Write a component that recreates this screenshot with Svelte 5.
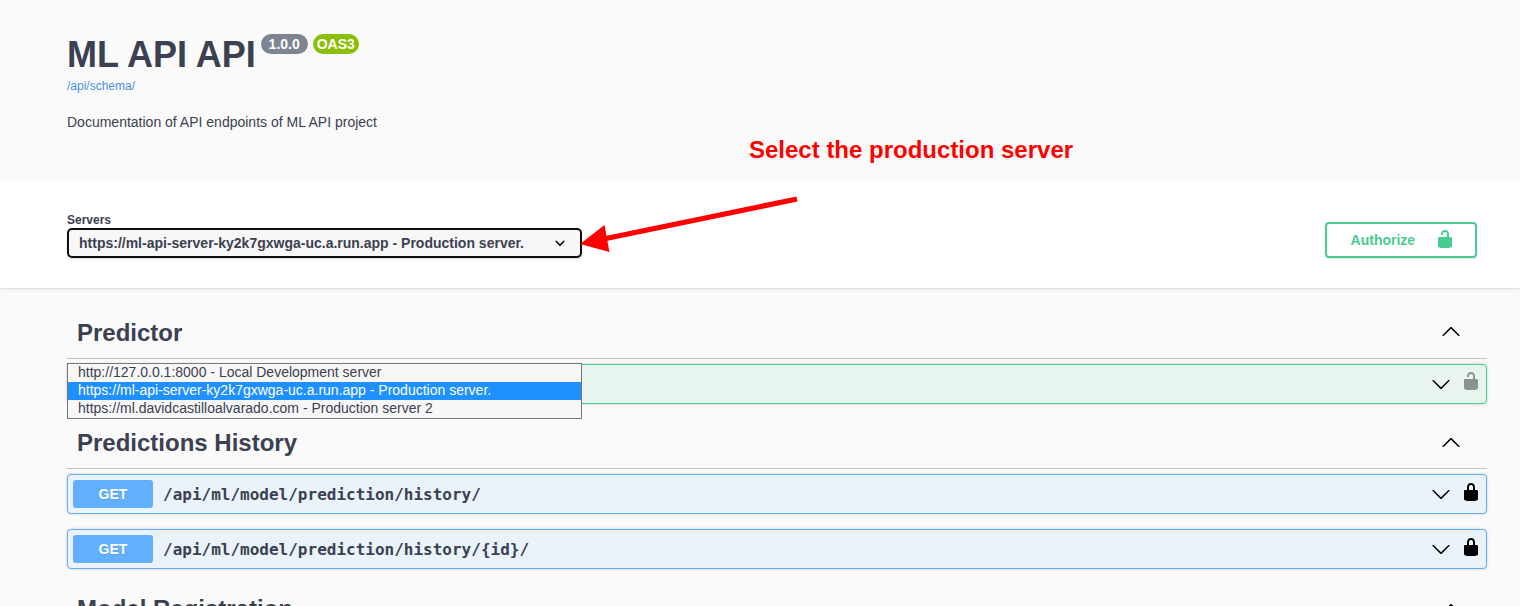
<script>
  const unlocked =
    'M15.8 8H14V5.6C14 2.703 12.665 1 10 1 7.334 1 6 2.703 6 5.6V6h2v-.801C8 3.754 8.797 3 10 3c1.203 0 2 .754 2 2.199V8H4c-.553 0-1 .646-1 1.199V17c0 .549.428 1.139.951 1.307l1.197.387C5.672 18.861 6.55 19 7.1 19h5.8c.549 0 1.428-.139 1.951-.307l1.196-.387c.524-.167.953-.757.953-1.306V9.199C17 8.646 16.352 8 15.8 8z';
  const locked =
    'M15.8 8H14V5.6C14 2.703 12.665 1 10 1 7.334 1 6 2.703 6 5.6V8H4c-.553 0-1 .646-1 1.199V17c0 .549.428 1.139.951 1.307l1.197.387C5.672 18.861 6.55 19 7.1 19h5.8c.549 0 1.428-.139 1.951-.307l1.196-.387c.524-.167.953-.757.953-1.306V9.199C17 8.646 16.352 8 15.8 8zM12 8H8V5.199C8 3.754 8.797 3 10 3c1.203 0 2 .754 2 2.199V8z';
  const up =
    'M17.418 14.908c.272.268.709.268.979 0s.271-.701 0-.969l-7.908-7.83c-.27-.268-.707-.268-.979 0l-7.908 7.83c-.27.268-.27.701 0 .969.271.268.709.268.979 0L10 7.767l7.418 7.141z';
  const down =
    'M17.418 6.109c.272-.268.709-.268.979 0s.271.701 0 .969l-7.908 7.83c-.27.268-.707.268-.979 0l-7.908-7.83c-.27-.268-.27-.701 0-.969.271-.268.709-.268.979 0L10 13.25l7.418-7.141z';
  const caret =
    'M13.418 7.859a.695.695 0 01.978 0 .68.68 0 010 .969l-3.908 3.83a.697.697 0 01-.979 0l-3.908-3.83a.68.68 0 010-.969.695.695 0 01.978 0L10 11l3.418-3.141z';

  const servers = [
    'http://127.0.0.1:8000 - Local Development server',
    'https://ml-api-server-ky2k7gxwga-uc.a.run.app - Production server.',
    'https://ml.davidcastilloalvarado.com - Production server 2'
  ];
  const selected = 1;

  const sections = [
    { name: 'Predictor', ops: [{ method: '', path: '', kind: 'post', lock: unlocked }] },
    {
      name: 'Predictions History',
      ops: [
        { method: 'GET', path: '/api/ml/model/prediction/history/', kind: 'get', lock: locked },
        { method: 'GET', path: '/api/ml/model/prediction/history/{id}/', kind: 'get', lock: locked }
      ]
    },
    { name: 'Model Registration', ops: [] }
  ];
</script>

{#snippet icon(d)}
  <svg width="20" height="20" viewBox="0 0 20 20" fill="currentColor"><path {d} /></svg>
{/snippet}

<div class="page">
  <header class="info">
    <h1>
      ML API API
      <span class="badges"><span class="badge version">1.0.0</span><span class="badge oas">OAS3</span></span>
    </h1>
    <a class="schema" href="#schema">/api/schema/</a>
    <p>Documentation of API endpoints of ML API project</p>
  </header>

  <section class="scheme">
    <div class="servers">
      <span class="label">Servers</span>
      <div class="select">
        <span>{servers[selected]}</span>
        {@render icon(caret)}
        <ul class="options">
          {#each servers as server, i}
            <li class:active={i === selected}>{server}</li>
          {/each}
        </ul>
      </div>
    </div>
    <button class="authorize"><span>Authorize</span>{@render icon(unlocked)}</button>
  </section>

  <main>
    {#each sections as section}
      <h3>{section.name}{@render icon(up)}</h3>
      {#each section.ops as op}
        <div class="op {op.kind}">
          {#if op.method}
            <span class="method">{op.method}</span>
            <span class="path">{op.path}</span>
          {/if}
          <span class="toggle">{@render icon(down)}</span>
          <span class="lock">{@render icon(op.lock)}</span>
        </div>
      {/each}
    {/each}
  </main>

  <div class="note">Select the production server</div>
  <svg class="arrow" width="224" height="64" viewBox="0 0 224 64">
    <path d="M221 9 30 48.500" stroke="#f00" stroke-width="5.200" />
    <path d="M4 54 28.500 35 33.500 62z" fill="#f00" />
  </svg>
</div>

<style>
  :global(body) {
    margin: 0;
    background: #fafafa;
  }
  .page {
    position: relative;
    height: 606px;
    overflow: hidden;
    box-sizing: border-box;
    background: #fafafa;
    color: #3b4151;
    font-family: 'Liberation Sans', Arial, sans-serif;
  }
  .page * {
    box-sizing: border-box;
  }
  svg {
    display: block;
    flex: none;
  }
  .info {
    height: 180px;
    padding: 34px 67px 0;
  }
  h1 {
    display: flex;
    align-items: flex-start;
    gap: 5px;
    margin: 0;
    height: 45px;
    font-size: 36px;
    line-height: 42px;
  }
  .badges {
    display: flex;
    gap: 5px;
  }
  .badge {
    height: 20px;
    border-radius: 10px;
    color: #fff;
    font-size: 14px;
    line-height: 20px;
    text-align: center;
  }
  .version {
    width: 47px;
    background: #7d8492;
  }
  .oas {
    width: 46px;
    background: #89bf04;
  }
  .schema {
    display: block;
    color: #4990e2;
    font-size: 12px;
    line-height: 14px;
    text-decoration: none;
  }
  .info p {
    margin: 21px 0 0;
    font-size: 14px;
    line-height: 16px;
  }
  .scheme {
    display: flex;
    justify-content: space-between;
    align-items: flex-start;
    height: 108px;
    padding: 32px 43px 0 67px;
    background: #fff;
    box-shadow: 0 1px 2px 0 rgba(0, 0, 0, 0.15);
  }
  .label {
    display: block;
    height: 16px;
    font-size: 12px;
    font-weight: 700;
    line-height: 17px;
  }
  .select {
    position: relative;
    display: flex;
    justify-content: space-between;
    align-items: center;
    width: 515px;
    height: 30px;
    padding: 0 10px;
    border: 2px solid #101010;
    border-radius: 5px;
    background: #f7f7f7;
    box-shadow: 0 1px 2px 0 rgba(0, 0, 0, 0.15);
    font-size: 14px;
    font-weight: 700;
  }
  .select svg {
    color: #000;
  }
  .options {
    position: absolute;
    z-index: 2;
    top: 133px;
    left: -2px;
    width: 515px;
    margin: 0;
    padding: 0;
    border: 1px solid #767676;
    background: #f7f7f7;
    font-weight: 400;
    list-style: none;
  }
  li {
    height: 18px;
    padding-left: 10px;
    line-height: 17px;
  }
  li.active {
    background: #1e90ff;
    color: #fff;
  }
  .authorize {
    display: flex;
    align-items: center;
    justify-content: space-between;
    width: 152px;
    height: 36px;
    margin-top: 10px;
    padding: 0 20px 2px 23.600px;
    border: 2px solid #49cc90;
    border-radius: 4px;
    background: transparent;
    box-shadow: 0 1px 2px rgba(0, 0, 0, 0.1);
    color: #49cc90;
    font: 700 14px 'Liberation Sans', Arial, sans-serif;
  }
  .authorize span {
    padding-top: 2px;
  }
  main {
    padding: 21px 33px 0 67px;
  }
  h3 {
    display: flex;
    justify-content: space-between;
    align-items: center;
    height: 50px;
    margin: 0 0 5px;
    padding: 0 26px 2px 10px;
    border-bottom: 1px solid rgba(59, 65, 81, 0.3);
    font-size: 24px;
  }
  h3:last-of-type {
    margin-top: 16px;
  }
  h3 svg {
    margin-bottom: 3px;
  }
  h3:nth-of-type(n + 2) svg {
    margin-bottom: 1px;
  }
  h3 svg,
  .toggle {
    color: #000;
  }
  .op {
    display: flex;
    align-items: center;
    height: 40px;
    margin-bottom: 15px;
    padding: 0 5px;
    border: 1px solid #61affe;
    border-radius: 4px;
    background: #eaf2fa;
    box-shadow: 0 0 3px rgba(0, 0, 0, 0.19);
  }
  .post {
    border-color: #49cc90;
    background: #e8f5ee;
  }
  .method {
    width: 80px;
    height: 28px;
    border-radius: 3px;
    background: #61affe;
    color: #fff;
    font-size: 14px;
    font-weight: 700;
    line-height: 28px;
    text-align: center;
    text-shadow: 0 1px 0 rgba(0, 0, 0, 0.1);
  }
  .path {
    padding-left: 10px;
    font-family: 'DejaVu Sans Mono', monospace;
    font-size: 16px;
    font-weight: 700;
  }
  .toggle {
    margin-left: auto;
  }
  .lock {
    margin-left: 10px;
    padding-bottom: 4px;
    color: #000;
  }
  .post .lock {
    color: #8b938f;
    padding-bottom: 6px;
  }
  .note {
    position: absolute;
    top: 136px;
    left: 749px;
    color: #f00;
    font-size: 24px;
    font-weight: 700;
    line-height: 28px;
    white-space: nowrap;
  }
  .arrow {
    position: absolute;
    top: 190px;
    left: 576px;
  }
</style>
